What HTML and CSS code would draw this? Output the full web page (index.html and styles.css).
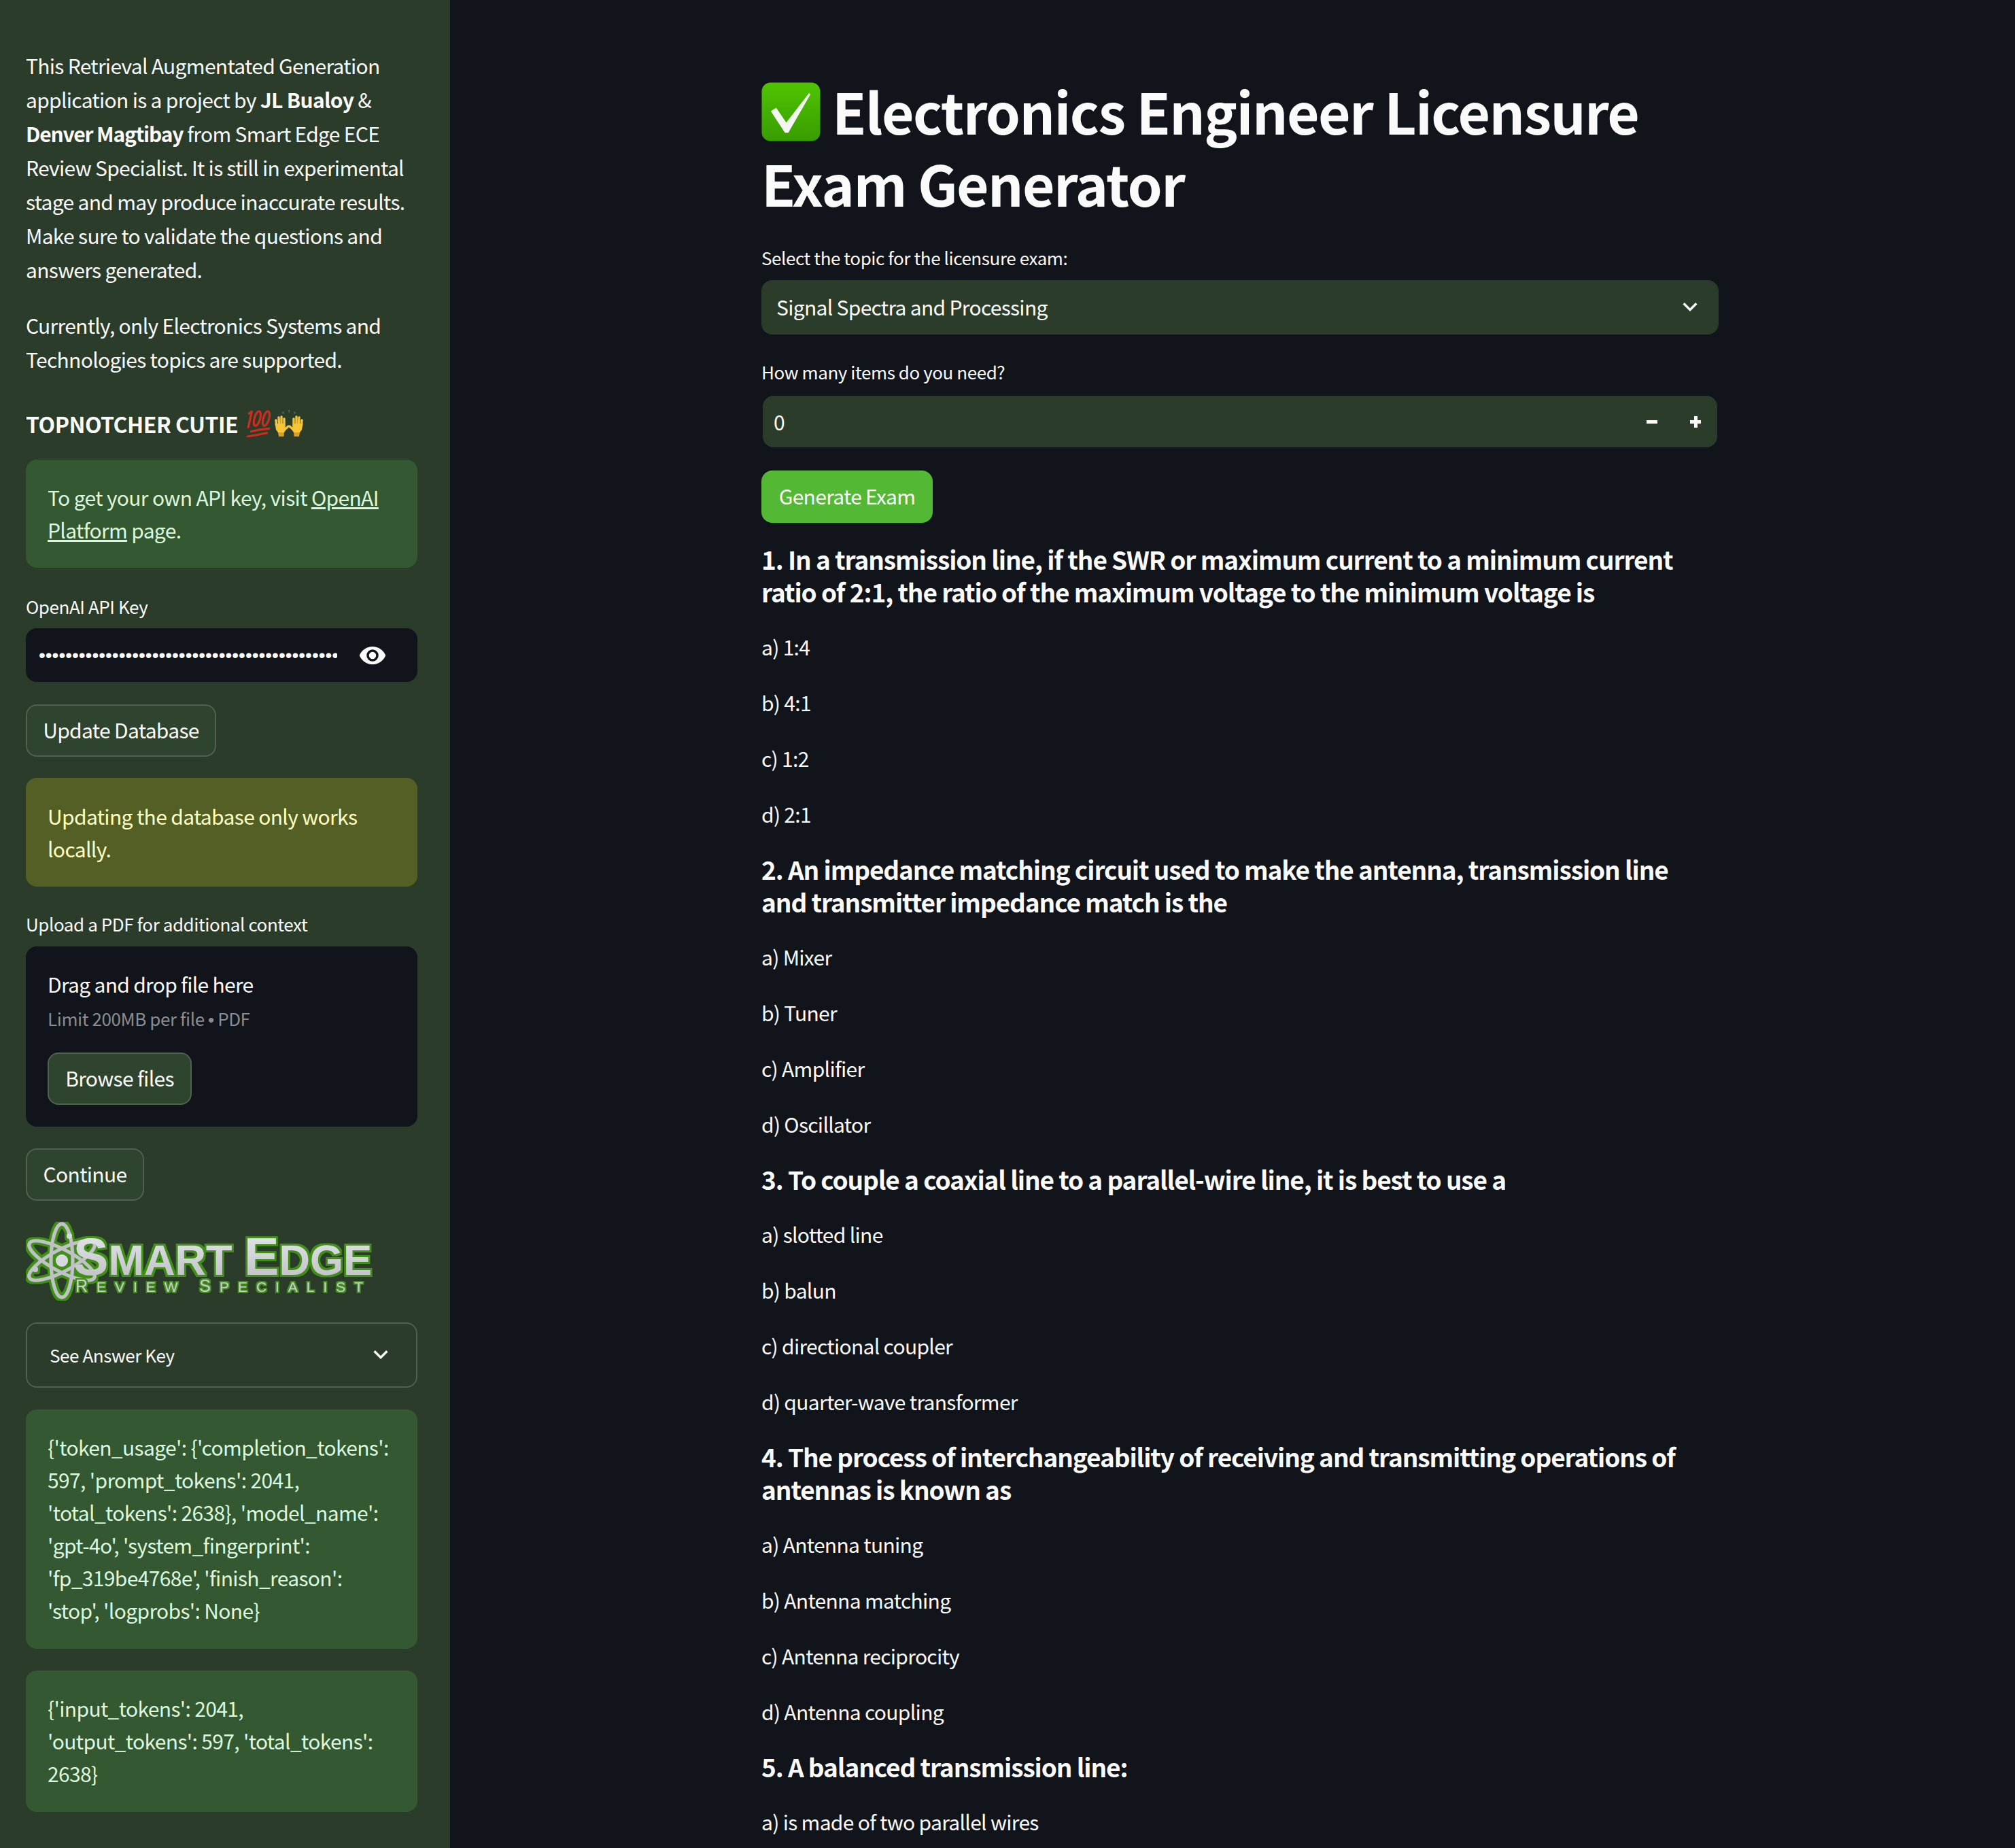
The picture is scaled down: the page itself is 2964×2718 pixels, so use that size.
FILE: index.html
```html
<!DOCTYPE html>
<html>
<head>
  <title>Electronics Engineer Licensure Exam Generator</title>
  <link rel="stylesheet" href="styles.css">
</head>
<body>
  <div id="app">
    <aside id="sidebar">
      <div class="intro">
        <p>This Retrieval Augmentated Generation application is a project by <b>JL Bualoy</b> &amp; <b class="tight">Denver Magtibay</b> from Smart Edge ECE Review Specialist. It is still in experimental stage and may produce inaccurate results. Make sure to validate the questions and answers generated.</p>
        <p>Currently, only Electronics Systems and Technologies topics are supported.</p>
      </div>
      <h4 class="side-title">TOPNOTCHER CUTIE
        <svg class="emoji hundred" viewBox="0 0 36 38">
          <g fill="none" stroke="#cf2c20" stroke-width="3" stroke-linecap="round">
            <path d="M8 2 L3 24 M8 2 L4 5"/>
            <ellipse cx="15.5" cy="12" rx="4" ry="10.5" transform="rotate(16 15.5 12)"/>
            <ellipse cx="28" cy="12" rx="4" ry="10.5" transform="rotate(16 28 12)"/>
            <path d="M7 30 Q20 27 32 26"/>
            <path d="M2 37 Q15 35 29 32"/>
          </g>
        </svg><svg class="emoji hands" viewBox="0 0 44 40">
          <defs>
            <g id="hand">
              <path fill="#f5c437" d="M1.5 20 L16.5 20 L17 30 L15 33 L6 33 L3 29 Z"/>
              <path fill="#dd9f22" d="M6 33 L15 33 L14.5 39 L7 39 Z"/>
              <g stroke="#f5c437" stroke-width="3.4" stroke-linecap="round">
                <path d="M3.5 22 L3 15"/>
                <path d="M7.5 20 L7 11"/>
                <path d="M11 20 L11 10"/>
                <path d="M15 22 L15 13"/>
                <path d="M15.5 29 L21 24"/>
              </g>
            </g>
          </defs>
          <use href="#hand"/>
          <use href="#hand" transform="translate(44 0) scale(-1 1)"/>
          <path fill="#5c6064" d="M11 4 L15 2 L14.5 6 Z M21 0 L23.5 0 L22.5 5 Z M33 4 L29 2 L29.5 6 Z"/>
        </svg>
      </h4>
      <div class="alert info">To get your own API key, visit <a href="#">OpenAI Platform</a> page.</div>

      <label class="side-label">OpenAI API Key</label>
      <div class="pass-input">
        <div class="dots">••••••••••••••••••••••••••••••••••••••••••••••••</div>
        <svg class="eye" viewBox="0 0 24 24"><path fill="#fafafa" d="M12 4.5C7 4.5 2.7 7.6 1 12c1.7 4.4 6 7.5 11 7.5s9.3-3.1 11-7.5c-1.7-4.4-6-7.5-11-7.5zM12 17a5 5 0 1 1 0-10 5 5 0 0 1 0 10zm0-8a3 3 0 1 0 0 6 3 3 0 0 0 0-6z"/></svg>
      </div>
      <button class="btn update-btn">Update Database</button>
      <div class="alert warn">Updating the database only works locally.</div>

      <label class="side-label upload-label">Upload a PDF for additional context</label>
      <div class="dropzone">
        <div class="drop-title">Drag and drop file here</div>
        <div class="drop-limit">Limit 200MB per file <span class="bullet">•</span> PDF</div>
        <button class="btn browse-btn">Browse files</button>
      </div>
      <button class="btn continue-btn">Continue</button>

      <svg class="logo" viewBox="0 0 512 116">
        <defs>
          <linearGradient id="metal" x1="0" y1="0" x2="0" y2="1">
            <stop offset="0" stop-color="#e6e8ec"/>
            <stop offset="1" stop-color="#bcbdc0"/>
          </linearGradient>
          <filter id="outline" x="-5%" y="-20%" width="110%" height="140%">
            <feMorphology in="SourceAlpha" operator="dilate" radius="3" result="wide"/>
            <feFlood flood-color="#3f8f16"/>
            <feComposite in2="wide" operator="in" result="edge"/>
            <feMerge result="merged">
              <feMergeNode in="edge"/>
              <feMergeNode in="SourceGraphic"/>
            </feMerge>
            <feGaussianBlur in="merged" stdDeviation="0.7"/>
          </filter>
          <filter id="thin-outline" x="-5%" y="-30%" width="110%" height="160%">
            <feMorphology in="SourceAlpha" operator="dilate" radius="2.2" result="wide"/>
            <feFlood flood-color="#3f8f16"/>
            <feComposite in2="wide" operator="in" result="edge"/>
            <feMerge result="merged">
              <feMergeNode in="edge"/>
              <feMergeNode in="SourceGraphic"/>
            </feMerge>
            <feGaussianBlur in="merged" stdDeviation="0.6"/>
          </filter>
        </defs>
        <g filter="url(#outline)">
          <g fill="none" stroke="#c0c1c4" stroke-width="5">
            <ellipse cx="53" cy="57" rx="16" ry="54"/>
            <ellipse cx="53" cy="57" rx="16" ry="54" transform="rotate(62 53 57)"/>
            <ellipse cx="53" cy="57" rx="16" ry="54" transform="rotate(-62 53 57)"/>
          </g>
          <circle cx="53" cy="57" r="9" fill="#d8d9dc"/>
          <circle cx="64" cy="21" r="4" fill="#d8d9dc"/>
          <circle cx="14" cy="70" r="4" fill="#c6c7ca"/>
          <text class="logo-big" x="70" y="78" textLength="439" lengthAdjust="spacingAndGlyphs">S<tspan class="logo-small">MART </tspan>E<tspan class="logo-small">DGE</tspan></text>
        </g>
        <text class="logo-sub" x="73" y="103" textLength="423" lengthAdjust="spacing" filter="url(#thin-outline)">R<tspan class="logo-subsmall">EVIEW </tspan>S<tspan class="logo-subsmall">PECIALIST</tspan></text>
      </svg>

      <div class="expander">
        <span>See Answer Key</span>
        <svg class="chev" viewBox="0 0 24 24"><path fill="none" stroke="#fafafa" stroke-width="2.6" d="M5 8.5 L12 15.5 L19 8.5"/></svg>
      </div>
      <div class="alert info meta">{'token_usage': {'completion_tokens': 597, 'prompt_tokens': 2041, 'total_tokens': 2638}, 'model_name': 'gpt-4o', 'system_fingerprint': 'fp_319be4768e', 'finish_reason': 'stop', 'logprobs': None}</div>
      <div class="alert info meta">{'input_tokens': 2041, 'output_tokens': 597, 'total_tokens': 2638}</div>
    </aside>

    <main id="main">
      <h1><svg class="check" viewBox="0 0 88 88">
          <defs>
            <linearGradient id="green" x1="0" y1="0" x2="0" y2="1">
              <stop offset="0" stop-color="#4fc402"/>
              <stop offset="1" stop-color="#389c00"/>
            </linearGradient>
          </defs>
          <rect x="0.5" y="0.5" width="87" height="87" rx="13" fill="url(#green)"/>
          <path fill="#f4f6f2" d="M14 43 L22 38 L37 60 L71 16 L73 18 L40 75 L35 75 Z"/>
        </svg> Electronics Engineer Licensure Exam Generator</h1>

      <label class="field-label">Select the topic for the licensure exam:</label>
      <div class="select-box">
        <span>Signal Spectra and Processing</span>
        <svg class="chev" viewBox="0 0 24 24"><path fill="none" stroke="#fafafa" stroke-width="2.6" d="M5 8.5 L12 15.5 L19 8.5"/></svg>
      </div>

      <label class="field-label second">How many items do you need?</label>
      <div class="number-box">
        <span class="num-value">0</span>
        <span class="step"><i class="minus"></i></span>
        <span class="step"><i class="minus"></i><i class="vert"></i></span>
      </div>

      <button class="generate">Generate Exam</button>

      <section class="questions">
        <h3>1. In a transmission line, if the SWR or maximum current to a minimum current ratio of 2:1, the ratio of the maximum voltage to the minimum voltage is</h3>
        <p>a) 1:4</p>
        <p>b) 4:1</p>
        <p>c) 1:2</p>
        <p>d) 2:1</p>

        <h3>2. An impedance matching circuit used to make the antenna, transmission line and transmitter impedance match is the</h3>
        <p>a) Mixer</p>
        <p>b) Tuner</p>
        <p>c) Amplifier</p>
        <p>d) Oscillator</p>

        <h3>3. To couple a coaxial line to a parallel-wire line, it is best to use a</h3>
        <p>a) slotted line</p>
        <p>b) balun</p>
        <p>c) directional coupler</p>
        <p>d) quarter-wave transformer</p>

        <h3>4. The process of interchangeability of receiving and transmitting operations of antennas is known as</h3>
        <p>a) Antenna tuning</p>
        <p>b) Antenna matching</p>
        <p>c) Antenna reciprocity</p>
        <p>d) Antenna coupling</p>

        <h3>5. A balanced transmission line:</h3>
        <p>a) is made of two parallel wires</p>
      </section>
    </main>
  </div>
</body>
</html>
```
FILE: styles.css
```css
html, body {
  margin: 0;
  padding: 0;
  height: 100%;
  overflow: hidden;
}

body {
  background-color: #11141a;
  color: #fafafa;
  font-family: "Noto Sans CJK SC", "Noto Sans", sans-serif;
  font-size: 30px;
  letter-spacing: -0.7px;
}

#app {
  display: flex;
  height: 2718px;
  overflow: hidden;
}

#sidebar {
  flex: 0 0 662px;
  box-sizing: border-box;
  background-color: #2b3c2a;
  padding: 71px 48px 0 38px;
  display: flex;
  flex-direction: column;
  align-items: flex-start;
}

#sidebar > * {
  flex-shrink: 0;
}

.intro p {
  margin: 0 0 32px;
  line-height: 50px;
}

.intro b {
  font-weight: 700;
}

.intro b.tight {
  letter-spacing: -1.2px;
}

.side-title {
  margin: 13px 0 0;
  font-size: 32px;
  font-weight: 700;
  letter-spacing: -0.5px;
  line-height: 50px;
  display: flex;
  align-items: center;
}

.emoji {
  height: 40px;
}

.hundred {
  width: 38px;
  margin-left: 12px;
}

.hands {
  width: 44px;
  margin-left: 3px;
}

.alert {
  box-sizing: border-box;
  width: 576px;
  padding: 32px;
  border-radius: 16px;
  line-height: 48px;
  letter-spacing: -0.65px;
}

.alert a {
  color: inherit;
}

.info {
  background-color: #345832;
  color: #dcf7de;
  margin-top: 28px;
  height: 159px;
  padding-top: 31px;
}

.warn {
  background-color: #545f25;
  color: #ffffc2;
  margin-top: 31px;
  height: 160px;
}

.side-label {
  font-size: 26px;
  letter-spacing: -0.43px;
  line-height: 36px;
  margin-top: 39px;
}

.pass-input {
  width: 576px;
  height: 79px;
  margin-top: 14px;
  box-sizing: border-box;
  padding: 0 45px 0 19px;
  background-color: #11141a;
  border-radius: 16px;
  display: flex;
  align-items: center;
  justify-content: space-between;
}

.dots {
  width: 439px;
  overflow: hidden;
  white-space: nowrap;
  font-family: "Liberation Sans", sans-serif;
  font-size: 28px;
  letter-spacing: 0;
}

.eye {
  width: 42px;
  height: 42px;
}

.btn {
  display: block;
  box-sizing: border-box;
  height: 77px;
  padding: 0 0 3px;
  border: 2px solid #51604f;
  border-radius: 16px;
  background-color: #2f442e;
  color: #fafafa;
  font-family: inherit;
  font-size: 30px;
  letter-spacing: -0.67px;
  white-space: nowrap;
}

.update-btn {
  margin-top: 33px;
  width: 280px;
}

.upload-label {
  margin-top: 37px;
}

.dropzone {
  box-sizing: border-box;
  width: 576px;
  height: 265px;
  margin-top: 15px;
  padding: 31px 32px 32px;
  background-color: #11141a;
  border-radius: 16px;
}

.drop-title {
  line-height: 48px;
}

.drop-limit {
  font-size: 26px;
  letter-spacing: -0.43px;
  line-height: 40px;
  margin-top: 7px;
  color: #8a8c90;
}

.bullet {
  font-family: "Liberation Sans", sans-serif;
  line-height: 0;
}

.browse-btn {
  width: 212px;
  margin-top: 30px;
}

.continue-btn {
  width: 174px;
  margin-top: 32px;
}

.logo {
  width: 512px;
  height: 116px;
  margin-top: 31px;
}

.logo-big {
  font-family: "Liberation Sans", sans-serif;
  font-weight: 700;
  font-size: 77px;
  letter-spacing: 0;
  fill: url(#metal);
}

.logo-small {
  font-size: 63px;
}

.logo-sub {
  font-family: "Liberation Sans", sans-serif;
  font-size: 25px;
  letter-spacing: 0;
  fill: #c9cbcd;
}

.logo-subsmall {
  font-size: 21px;
}

.expander {
  box-sizing: border-box;
  width: 576px;
  height: 96px;
  margin-top: 32px;
  padding: 0 36px 2px 33px;
  border: 2px solid #51604f;
  border-radius: 16px;
  display: flex;
  align-items: center;
  justify-content: space-between;
  font-size: 26px;
  letter-spacing: -0.43px;
}

.chev {
  width: 32px;
  height: 32px;
}

.info.meta {
  height: auto;
  margin-top: 32px;
  padding-top: 31px;
  padding-bottom: 33px;
}

#main {
  flex: 1;
  padding: 0 436px 0 458px;
  min-width: 0;
}

h1 {
  margin: 0;
  padding-top: 110px;
  font-size: 82px;
  letter-spacing: -1.6px;
  line-height: 106px;
  font-weight: 700;
}

.check {
  width: 87px;
  height: 87px;
  vertical-align: -10px;
}

.field-label {
  display: block;
  font-size: 26px;
  letter-spacing: -0.43px;
  line-height: 36px;
  margin-top: 39px;
}

.field-label.second {
  margin-top: 37px;
}

.select-box {
  box-sizing: border-box;
  height: 80px;
  margin-top: 15px;
  padding: 0 26px 2px 22px;
  background-color: #2b3d2a;
  border-radius: 16px;
  display: flex;
  align-items: center;
  justify-content: space-between;
}

.number-box {
  box-sizing: border-box;
  height: 76px;
  margin: 17px 2px 0;
  padding: 0 0 0 16px;
  background-color: #2b3d2a;
  border-radius: 16px;
  display: flex;
  align-items: center;
}

.num-value {
  flex: 1;
}

.step {
  position: relative;
  width: 64px;
  height: 76px;
}

.step i {
  position: absolute;
  background-color: #fafafa;
}

.step .minus {
  left: 24px;
  top: 36px;
  width: 16px;
  height: 5px;
}

.step .vert {
  left: 29.5px;
  top: 30px;
  width: 5px;
  height: 17px;
}

.generate {
  display: block;
  width: 252px;
  height: 77px;
  margin-top: 34px;
  padding: 0 0 4px;
  border: none;
  border-radius: 16px;
  background-color: #53b935;
  color: #fafafa;
  font-family: inherit;
  font-size: 30px;
  letter-spacing: -0.7px;
}

.questions h3 {
  margin: 32px 0 0;
  max-width: 1395px;
  font-size: 37px;
  letter-spacing: -1.1px;
  line-height: 48px;
  font-weight: 700;
}

.questions h3:first-child {
  margin-top: 29px;
}

.questions p {
  margin: 32px 0 0;
  line-height: 50px;
}
```
